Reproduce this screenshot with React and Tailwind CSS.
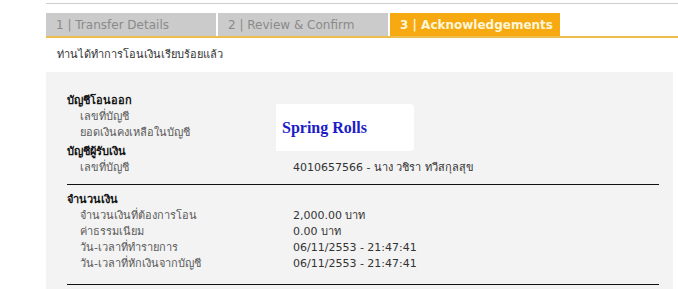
import React from "react";

const FONT = { fontFamily: '"DejaVu Sans", "Noto Sans", sans-serif' };

const TABS = [
  { id: 1, label: "1 | Transfer Details" },
  { id: 2, label: "2 | Review & Confirm" },
  { id: 3, label: "3 | Acknowledgements", active: true },
];

const Row = ({ label, value }) => (
  <div className="flex h-4 items-center leading-4">
    <div className="w-[226px] shrink-0 pl-[13px] text-[#5a5a5a]">{label}</div>
    <div className="text-[#333]">{value}</div>
  </div>
);

const Heading = ({ children, className = "" }) => (
  <div className={`h-4 leading-4 font-bold text-[#111] ${className}`}>{children}</div>
);

export default function App() {
  return (
    <div className="h-[289px] w-[678px] overflow-hidden bg-white text-[11px]" style={FONT}>
      <div className="pl-[46px] pt-[3px]">
        <div className="h-px bg-[#cfcfcf]" />

        {/* tabs */}
        <div className="mt-[9px] flex h-[23px] gap-[2px]">
          {TABS.map((t) => (
            <div
              key={t.id}
              className={
                t.active
                  ? "flex w-[170px] items-center bg-[#f6a911] pl-[10px] text-[12px] font-bold text-[#fff6d8]"
                  : "flex w-[170px] items-center bg-[#cbcbcb] pl-[10px] text-[12px] text-[#8a8a8a]"
              }
            >
              {t.label}
            </div>
          ))}
        </div>
        <div className="h-[2px] bg-[#ecbf4c]" />

        <div className="flex h-[34px] items-center pl-[11px] text-[#333]">
          ท่านได้ทำการโอนเงินเรียบร้อยแล้ว
        </div>

        {/* details panel */}
        <div className="relative w-[627px] bg-[#f3f3f3] pb-[4px] pl-[21px] pr-[14px] pt-[21px]">
          <Heading>บัญชีโอนออก</Heading>
          <Row label="เลขที่บัญชี" value="" />
          <Row label="ยอดเงินคงเหลือในบัญชี" value="" />
          <Heading className="mt-[3px]">บัญชีผู้รับเงิน</Heading>
          <Row label="เลขที่บัญชี" value="4010657566 - นาง วชิรา ทวีสกุลสุข" />
          <div className="mt-2 h-px w-[592px] bg-[#111]" />

          <Heading className="mt-[7px]">จำนวนเงิน</Heading>
          <Row label="จำนวนเงินที่ต้องการโอน" value="2,000.00 บาท" />
          <Row label="ค่าธรรมเนียม" value="0.00 บาท" />
          <Row label="วัน-เวลาที่ทำรายการ" value="06/11/2553 - 21:47:41" />
          <Row label="วัน-เวลาที่หักเงินจากบัญชี" value="06/11/2553 - 21:47:41" />
          <div className="mt-3 h-px w-[592px] bg-[#111]" />

          {/* overlay label */}
          <div className="absolute left-[230px] top-[32px] flex h-[47px] w-[138px] items-center rounded-r-sm bg-white pl-[6px]">
            <span
              className="text-[16px] font-bold text-[#1c1cc8]"
              style={{ fontFamily: '"Liberation Serif", serif' }}
            >
              Spring Rolls
            </span>
          </div>
        </div>
      </div>
    </div>
  );
}
